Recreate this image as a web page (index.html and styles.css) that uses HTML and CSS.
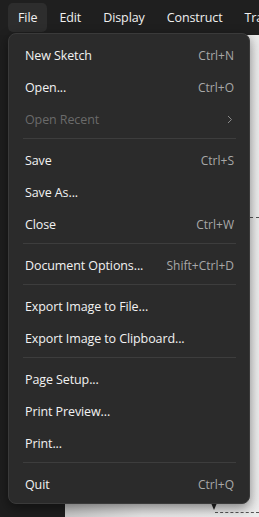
FILE: index.html
```html
<!DOCTYPE html>
<html>
<head>
<meta charset="utf-8">
<link rel="stylesheet" href="styles.css">
</head>
<body>
<div class="app">
  <nav class="menubar">
    <span class="mb-item active">File</span>
    <span class="mb-item">Edit</span>
    <span class="mb-item">Display</span>
    <span class="mb-item">Construct</span>
    <span class="mb-item">Transform</span>
  </nav>
  <div class="workspace">
    <div class="sidebar"></div>
    <div class="canvas">
      <div class="guide guide-mid"></div>
      <div class="guide guide-bottom"></div>
      <div class="marker"></div>
    </div>
  </div>
  <div class="menu">
    <div class="item"><span>New Sketch</span><span class="sc">Ctrl+N</span></div>
    <div class="item"><span>Open...</span><span class="sc">Ctrl+O</span></div>
    <div class="item disabled"><span>Open Recent</span><svg class="chev" width="6" height="9" viewBox="0 0 6 9"><path d="M1 1 L4.5 4.5 L1 8" fill="none" stroke="currentColor" stroke-width="1"/></svg></div>
    <div class="sep"></div>
    <div class="item"><span>Save</span><span class="sc">Ctrl+S</span></div>
    <div class="item"><span>Save As...</span></div>
    <div class="item"><span>Close</span><span class="sc">Ctrl+W</span></div>
    <div class="sep"></div>
    <div class="item"><span>Document Options...</span><span class="sc">Shift+Ctrl+D</span></div>
    <div class="sep"></div>
    <div class="item"><span>Export Image to File...</span></div>
    <div class="item"><span>Export Image to Clipboard...</span></div>
    <div class="sep"></div>
    <div class="item"><span>Page Setup...</span></div>
    <div class="item"><span>Print Preview...</span></div>
    <div class="item"><span>Print...</span></div>
    <div class="sep"></div>
    <div class="item"><span>Quit</span><span class="sc">Ctrl+Q</span></div>
  </div>
</div>
</body>
</html>
```

FILE: styles.css
```css
* { box-sizing: border-box; }
html, body {
  margin: 0;
  padding: 0;
  width: 259px;
  height: 517px;
  overflow: hidden;
  background: #1c1c1c;
  font-family: "Open Sans", "Noto Sans", sans-serif;
  font-size: 12.5px;
  letter-spacing: -0.1px;
}
.app {
  position: relative;
  width: 259px;
  height: 517px;
  display: flex;
  flex-direction: column;
}
.menubar {
  height: 35px;
  display: flex;
  align-items: flex-start;
  padding: 3px 0 0 8px;
  background: #1f1f1f;
  white-space: nowrap;
  overflow: hidden;
  flex: none;
}
.mb-item {
  height: 29px;
  line-height: 29px;
  padding: 0 10px;
  color: #f0f0f0;
  border-radius: 5px;
  flex: none;
  margin-right: 2px;
}
.mb-item.active { background: #2d2d2d; }
.workspace {
  flex: 1;
  display: flex;
}
.sidebar {
  width: 65px;
  background: #1e1e1e;
  flex: none;
}
.canvas {
  position: relative;
  flex: 1;
  background: linear-gradient(90deg, #c8c8c8 0px, #e4e4e4 40%, #ececec 100%);
}
.guide {
  position: absolute;
  height: 0;
  border-top: 1px dashed #555;
}
.guide-mid { top: 182px; left: 185px; right: 0; }
.guide-bottom { top: 477px; left: 150px; right: 0; }
.marker {
  position: absolute;
  left: 146px;
  top: 468px;
  width: 0;
  height: 0;
  border-left: 3px solid transparent;
  border-right: 3px solid transparent;
  border-top: 7px solid #222;
}
.menu {
  position: absolute;
  left: 8px;
  top: 33px;
  width: 242px;
  background: #2b2b2b;
  border: 1px solid #3a3a3a;
  border-radius: 8px;
  padding: 5px 0 3px;
  box-shadow: 0 4px 12px rgba(0,0,0,0.45);
  color: #f2f2f2;
}
.item {
  height: 32px;
  display: flex;
  align-items: center;
  justify-content: space-between;
  padding: 0 15px 0 16px;
  white-space: nowrap;
}
.sc { color: #a8a8a8; font-size: 12px; letter-spacing: 0; }
.item.disabled { color: #6a6a6a; }
.chev { color: #8a8a8a; margin-right: 1px; }
.sep {
  height: 1px;
  background: #3d3d3d;
  margin: 3px 13px 5px 14px;
}
```
